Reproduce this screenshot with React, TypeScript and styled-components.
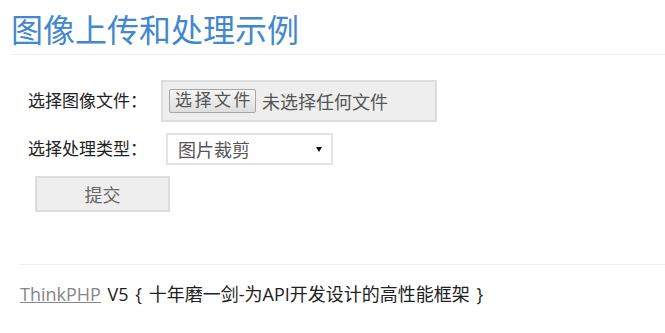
import React from "react";
import styled, { createGlobalStyle } from "styled-components";

const GlobalStyle = createGlobalStyle`
  body {
    margin: 0;
    background: #fff;
    color: #333;
    font-family: "Open Sans", "Noto Sans CJK SC", sans-serif;
  }
`;

const Page = styled.div`
  padding: 0 0 0 11px;
`;

const Title = styled.h1`
  margin: 10px 0 0;
  padding-bottom: 4px;
  font-size: 32px;
  line-height: 40px;
  font-weight: normal;
  color: #4288ce;
  border-bottom: 1px solid #eee;
`;

const Form = styled.form`
  display: flex;
  flex-direction: column;
  gap: 11px;
  padding: 25px 0 0 17px;
`;

const Row = styled.div`
  display: flex;
  align-items: center;
`;

const Label = styled.label`
  width: 133px;
  font-size: 17px;
  line-height: 24px;
  color: #222;
`;

const FileBox = styled.div`
  display: flex;
  align-items: center;
  gap: 6px;
  width: 260px;
  height: 38px;
  padding: 0 6px;
  background: #eee;
  border: 2px solid #ddd;
`;

const FileButton = styled.button`
  height: 24px;
  padding: 0 2px 0 5px;
  font-family: "Liberation Serif", "Noto Sans CJK SC", serif;
  font-size: 17px;
  letter-spacing: 2.5px;
  line-height: 20px;
  color: #555;
  background: linear-gradient(#f6f6f6, #dedede);
  border: 1px solid #a6a6a6;
  border-radius: 2px;
`;

const FileHint = styled.span`
  font-size: 18px;
  color: #555;
`;

const SelectBox = styled.div`
  display: flex;
  align-items: center;
  justify-content: space-between;
  box-sizing: border-box;
  width: 167px;
  height: 32px;
  margin-left: 5px;
  padding: 0 9px 0 10px;
  border: 2px solid #e3e3e3;
  background: #fff;
  font-size: 18px;
  color: #555;
`;

const Submit = styled.button`
  width: 135px;
  height: 36px;
  margin-left: 7px;
  background: #eee;
  border: 2px solid #ddd;
  font-family: "Liberation Serif", "Noto Sans CJK SC", serif;
  font-size: 18px;
  color: #666;
`;

const Footer = styled.div`
  margin: 52px 0 0 9px;
  padding-top: 16px;
  border-top: 1px solid #eee;
  font-size: 18px;
  line-height: 26px;
  word-spacing: 2px;
  color: #222;
`;

const Link = styled.a`
  color: #868686;
  text-decoration: underline;
`;

function App() {
  return (
    <Page>
      <GlobalStyle />
      <Title>图像上传和处理示例</Title>
      <Form>
        <Row>
          <Label>选择图像文件：</Label>
          <FileBox>
            <FileButton type="button">选择文件</FileButton>
            <FileHint>未选择任何文件</FileHint>
          </FileBox>
        </Row>
        <Row>
          <Label>选择处理类型：</Label>
          <SelectBox>
            <span>图片裁剪</span>
            <svg width="6" height="7" viewBox="0 0 6 7">
              <path d="M0 1h6L3 6z" fill="#111" />
            </svg>
          </SelectBox>
        </Row>
        <Row>
          <Submit type="button">提交</Submit>
        </Row>
      </Form>
      <Footer>
        <Link href="#">ThinkPHP</Link> V5 {"{"} 十年磨一剑-为API开发设计的高性能框架 {"}"}
      </Footer>
    </Page>
  );
}

export default App;
